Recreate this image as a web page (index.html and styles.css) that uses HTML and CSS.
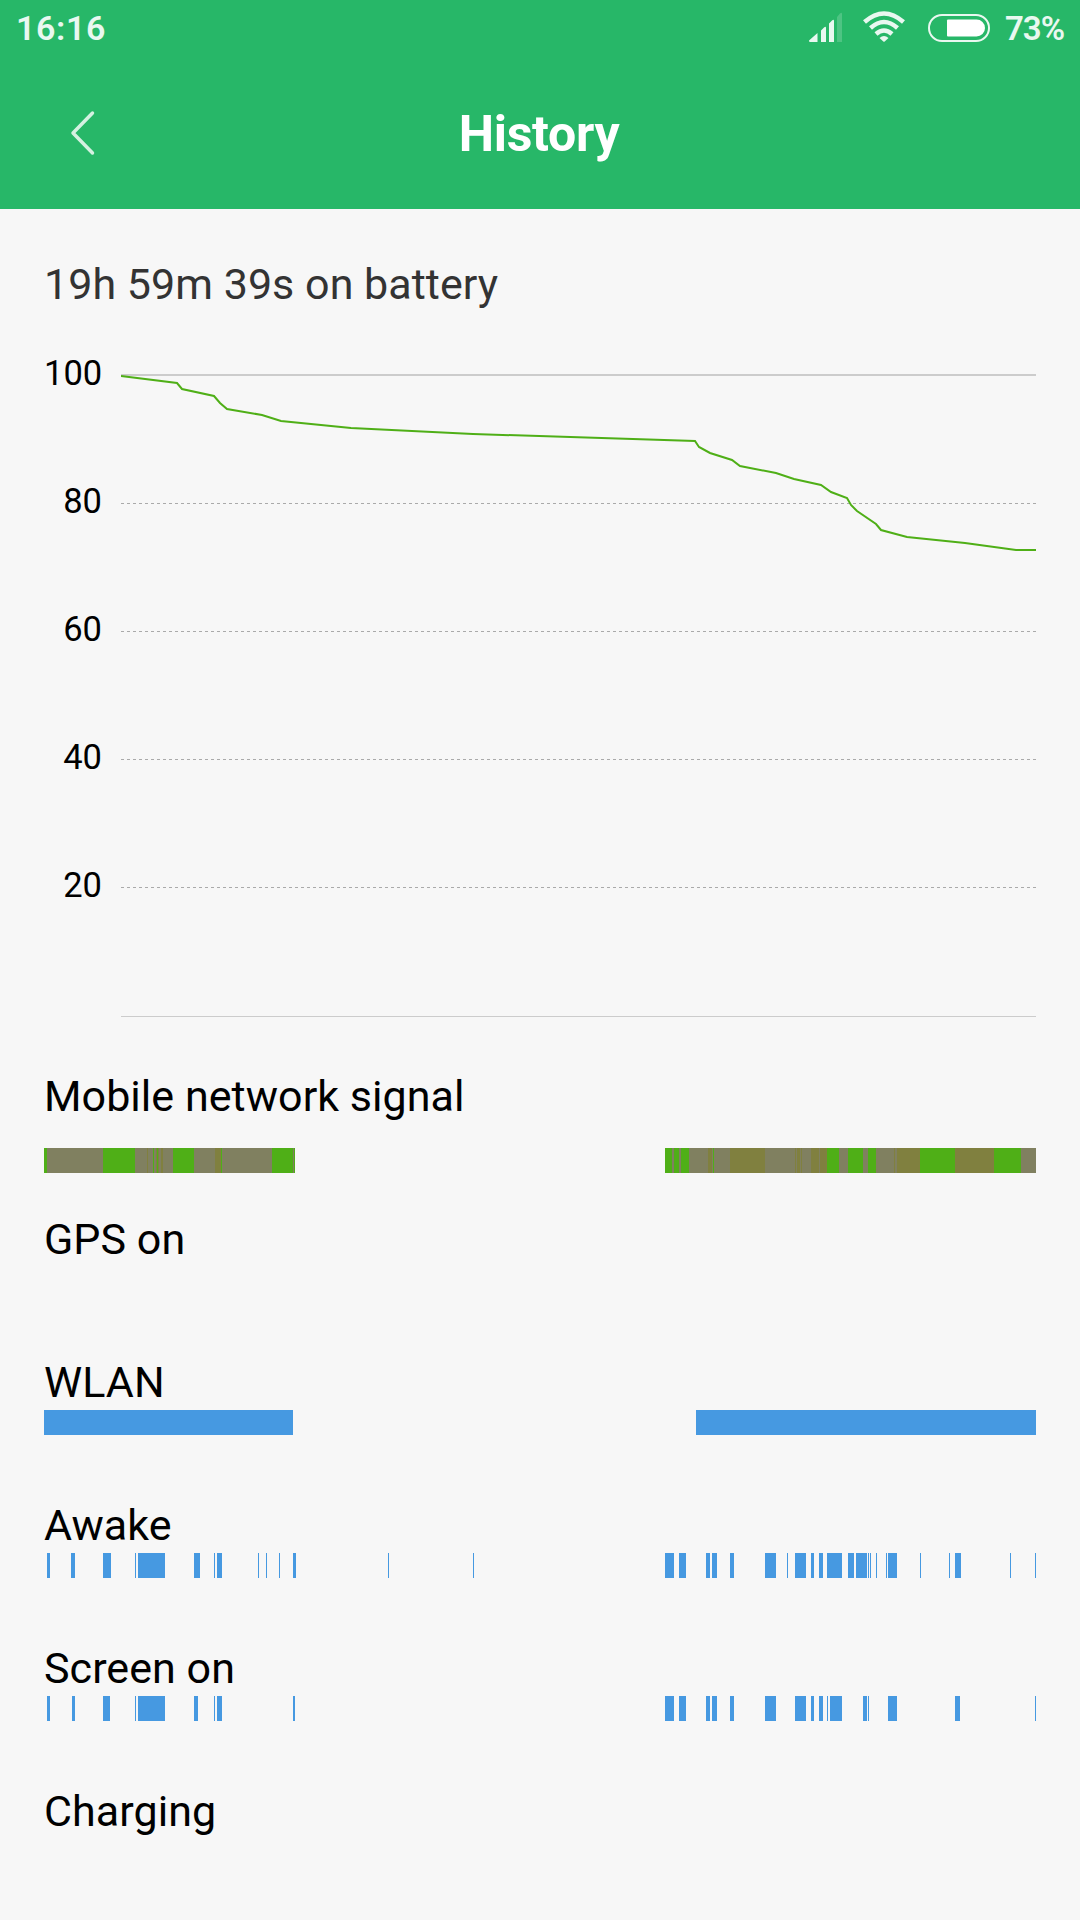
FILE: index.html
```html
<!DOCTYPE html>
<html lang="en">
<head>
    <meta charset="UTF-8">
    <meta name="viewport" content="width=device-width, initial-scale=1.0">
    <title>History</title>
    <link rel="stylesheet" href="styles.css">
</head>
<body>
    <header>
        <div class="status-bar">
            <span class="clock">16:16</span>
            <svg class="signal" width="34" height="30" viewBox="0 0 34 30">
                <path d="M0 28.500 8.500 21V30H1Q0 30 0 28.500zM12 18.500l3-3q2-1.500 2 .5V30h-5zM20 11.500l3-3q2-1.500 2 .5V30h-5z"/>
                <path class="off" d="M28 5l3-3.500q2-1.500 2 .5V30h-5z"/>
            </svg>
            <svg class="wifi" width="44" height="32" viewBox="0 0 44 32">
                <path d="M2.500 11Q22-6 41.500 11M8.500 17Q22 5 35.500 17M14 23Q22 16 30 23"/>
                <path class="dot" d="M17.500 27Q22 23 26.500 27L22.700 30.600Q22 31 21.300 30.600z"/>
            </svg>
            <svg class="battery" width="62" height="28" viewBox="0 0 62 28">
                <rect class="shell" x="1" y="1" width="60" height="26" rx="13"/>
                <path d="M20 5.500h28.500a8.500 8.500 0 0 1 0 17H20q-1 0-1-1v-15q0-1 1-1z"/>
            </svg>
            <span class="percent">73%</span>
        </div>
        <div class="title-bar">
            <svg class="back" width="26" height="46" viewBox="0 0 26 46">
                <path d="M22.500 3 3 23l19.500 20"/>
            </svg>
            <h1>History</h1>
        </div>
    </header>
    <main>
        <h2>19h 59m 39s on battery</h2>
        <div class="chart">
            <div class="scale">
                <span>100</span>
                <span>80</span>
                <span>60</span>
                <span>40</span>
                <span>20</span>
            </div>
            <svg class="graph" width="915" height="644" viewBox="0 0 915 644">
                <path class="edge" d="M0 2H915"/>
                <path class="grid" d="M0 130.500H915M0 258.500H915M0 386.500H915M0 514.500H915"/>
                <path class="base" d="M0 643.500H915"/>
                <polyline class="level" points="0,3 56,10 61,16 93,23 99,30 106,36 141,42 160,48 230,55 352,61 574,68 578,74 589,80 611,87 619,93 655,100 673,106 700,112 710,119 726,125 730,132 736,138 755,151 760,157 786,164 844,170 895,177 915,177"/>
            </svg>
        </div>
        <section>
            <h3>Mobile network signal</h3>
            <svg class="strip shifted" id="mobile" width="992" height="25"></svg>
        </section>
        <section>
            <h3>GPS on</h3>
        </section>
        <section>
            <h3>WLAN</h3>
            <svg class="strip" id="wlan" width="992" height="25"></svg>
        </section>
        <section>
            <h3>Awake</h3>
            <svg class="strip" id="awake" width="992" height="25"></svg>
        </section>
        <section>
            <h3>Screen on</h3>
            <svg class="strip" id="screen" width="992" height="25"></svg>
        </section>
        <section>
            <h3>Charging</h3>
        </section>
    </main>

    <script>
        // Each segment is [start, width, class]
        const strips = {
            mobile: [
                [0, 251, 'weak'], [0, 3, 'good'], [59, 32, 'good'], [103, 1, 'poor'], [109, 1, 'good'],
                [112, 1, 'poor'], [113, 1, 'good'], [114, 1, 'poor'], [117, 2, 'poor'], [129, 21, 'good'],
                [171, 6, 'poor'], [177, 1, 'good'], [228, 23, 'good'], [249, 1, 'weak'],
                [621, 371, 'weak'], [621, 7, 'good'], [630, 5, 'good'], [637, 8, 'good'], [664, 4, 'poor'],
                [669, 1, 'good'], [686, 35, 'poor'], [751, 1, 'poor'], [753, 3, 'poor'], [757, 1, 'poor'],
                [767, 8, 'poor'], [776, 7, 'poor'], [783, 12, 'good'], [804, 15, 'good'], [824, 8, 'good'],
                [850, 1, 'poor'], [853, 23, 'poor'], [876, 35, 'good'], [911, 39, 'poor'], [950, 27, 'good']
            ],
            wlan: [[0, 249], [652, 340]],
            awake: [
                [3, 3], [27, 4], [59, 8], [91, 1], [94, 27], [150, 6], [170, 1], [173, 5], [214, 1],
                [222, 1], [235, 1], [249, 3], [344, 1], [429, 1], [621, 9], [635, 7], [662, 4], [668, 5],
                [686, 4], [721, 11], [743, 1], [751, 11], [767, 3], [775, 4], [783, 15], [804, 6],
                [812, 11], [824, 1], [826, 1], [832, 1], [842, 1], [844, 9], [876, 1], [905, 1],
                [911, 6], [966, 1], [991, 1]
            ],
            screen: [
                [3, 3], [28, 3], [59, 7], [91, 1], [94, 27], [150, 4], [170, 1], [173, 5], [249, 2],
                [621, 9], [635, 7], [662, 4], [668, 5], [686, 4], [721, 11], [751, 11], [767, 3],
                [775, 4], [783, 1], [786, 12], [819, 4], [824, 1], [844, 9], [911, 5], [991, 1]
            ]
        };

        for (const id in strips) {
            document.getElementById(id).innerHTML = strips[id].map(([x, width, type]) =>
                `<rect class="${type || 'on'}" x="${x}" y="0" width="${width}" height="25"/>`
            ).join('');
        }
    </script>
</body>
</html>
```
FILE: styles.css
```css
body {
    font-family: Roboto, "Noto Sans", sans-serif;
    margin: 0;
    background-color: #f7f7f7;
    color: #000;
}
header {
    height: 209px;
    background-color: #27b768;
    color: white;
}
h1, h2, h3 {
    margin: 0;
}
svg {
    display: block;
    flex: none;
}
.status-bar {
    display: flex;
    height: 56px;
    padding: 0 17px 0 16px;
    color: #e9f8f0;
    fill: #e9f8f0;
    font-size: 33px;
    font-weight: 600;
    line-height: 57px;
}
.clock {
    flex-grow: 1;
    font-size: 34px;
    letter-spacing: 0.6px;
}
.percent {
    width: 58px;
    white-space: nowrap;
    letter-spacing: -1px;
}
.signal {
    margin: 12px 19px 0 0;
}
.signal .off {
    opacity: 0.2;
}
.wifi {
    margin: 11px 22px 0 0;
    fill: none;
    stroke: #e9f8f0;
    stroke-width: 4.5;
}
.wifi .dot {
    fill: #e9f8f0;
    stroke: none;
}
.battery {
    margin: 14px 15px 0 0;
    fill: white;
}
.battery .shell {
    fill: none;
    stroke: #e9f8f0;
    stroke-width: 2;
}
.title-bar {
    display: grid;
    grid-template-columns: 1fr auto 1fr;
    align-items: center;
    height: 153px;
}
.back {
    margin: 0 0 0 70px;
    fill: none;
    stroke: #d4f1e1;
    stroke-width: 3.5;
    stroke-linecap: round;
    stroke-linejoin: round;
}
.title-bar h1 {
    padding: 2px 2px 0 0;
    font-size: 50px;
    font-weight: 700;
    letter-spacing: -0.3px;
}
main {
    padding: 49px 44px 0;
}
h2 {
    height: 115px;
    color: #333;
    font-size: 43px;
    font-weight: 400;
    letter-spacing: 0.04px;
    line-height: 52px;
}
.chart {
    display: flex;
    justify-content: space-between;
    height: 697px;
}
.scale {
    width: 58px;
    font-size: 34.5px;
    line-height: 40px;
    text-align: right;
    margin-top: -20px;
}
.scale span {
    display: block;
    height: 128px;
}
.edge {
    stroke: #ccc;
    stroke-width: 2;
}
.grid {
    stroke: #aaa;
    stroke-dasharray: 3 3;
}
.base {
    stroke: #ccc;
}
.level {
    fill: none;
    stroke: #4faf17;
    stroke-width: 2;
}
section {
    height: 143px;
}
h3 {
    height: 70px;
    font-size: 43px;
    font-weight: 400;
    letter-spacing: 0.05px;
    line-height: 52px;
}
section .strip {
    margin-top: -16px;
}
section .shifted {
    margin-top: 8px;
}
.on {
    fill: #4699e1;
}
.good {
    fill: #4faf17;
}
.poor {
    fill: #80803f;
}
.weak {
    fill: #808060;
}
```
